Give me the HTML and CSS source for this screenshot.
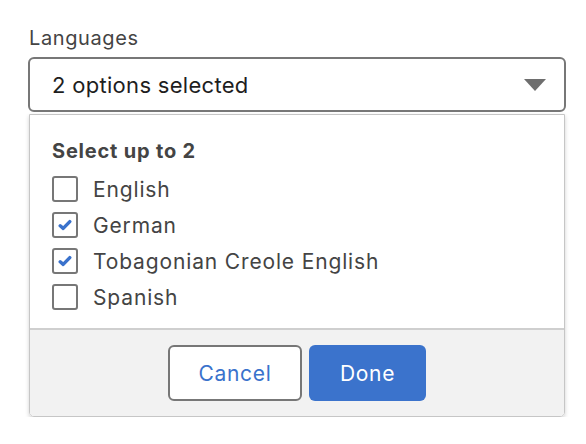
FILE: index.html
```html
<!DOCTYPE html>
<html lang="en">
<head>
<meta charset="utf-8">
<title>Languages</title>
<link rel="stylesheet" href="styles.css">
</head>
<body>
<div class="field">
  <div class="label">Languages</div>
  <div class="select">
    <span class="select-value">2 options selected</span>
    <svg class="caret" width="22" height="12" viewBox="0 0 22 12"><path d="M0 0H22L11 12Z" fill="#6e6e6e"/></svg>
  </div>
  <div class="panel">
    <div class="panel-body">
      <div class="heading">Select up to 2</div>
      <ul class="options">
        <li class="option"><span class="box"></span>English</li>
        <li class="option"><span class="box"><svg class="check" width="14" height="12" viewBox="0 0 14 12"><path d="M2.2 6.8L5.2 9.4L11.8 2.6" fill="none" stroke="#3a72cc" stroke-width="3.4" stroke-linecap="round" stroke-linejoin="round"/></svg></span>German</li>
        <li class="option"><span class="box"><svg class="check" width="14" height="12" viewBox="0 0 14 12"><path d="M2.2 6.8L5.2 9.4L11.8 2.6" fill="none" stroke="#3a72cc" stroke-width="3.4" stroke-linecap="round" stroke-linejoin="round"/></svg></span>Tobagonian Creole English</li>
        <li class="option"><span class="box"></span>Spanish</li>
      </ul>
    </div>
    <div class="panel-footer">
      <button class="btn btn-cancel">Cancel</button>
      <button class="btn btn-done">Done</button>
    </div>
  </div>
</div>
</body>
</html>
```

FILE: styles.css
```css
html, body {
  margin: 0;
  padding: 0;
  background: #ffffff;
}
body {
  font-family: Inter, "Liberation Sans", sans-serif;
  color: #444444;
}
.field {
  width: 538px;
  margin-left: 28px;
  padding-top: 26px;
}
.label {
  font-size: 20px;
  line-height: 24px;
  letter-spacing: 0.6px;
  color: #444444;
  padding-left: 1px;
}
.select {
  margin-top: 7px;
  height: 55px;
  box-sizing: border-box;
  border: 2px solid #777777;
  border-radius: 6px;
  display: flex;
  align-items: center;
  justify-content: space-between;
  padding: 0 18px 0 22px;
}
.select-value {
  font-size: 22px;
  letter-spacing: 0.3px;
  color: #1e1e1e;
}
.caret {
  display: block;
}
.panel {
  margin: 2px 1px 0;
  border: 1px solid #c6c6c6;
  border-radius: 0 0 5px 5px;
  box-shadow: 0 2px 4px rgba(0, 0, 0, 0.18);
  overflow: hidden;
}
.panel-body {
  padding: 24px 22px 13px;
}
.heading {
  font-size: 20px;
  font-weight: 700;
  line-height: 24px;
  letter-spacing: 0.8px;
  color: #444444;
}
.options {
  list-style: none;
  margin: 8px 0 0;
  padding: 0;
}
.option {
  display: flex;
  align-items: center;
  gap: 15px;
  height: 36px;
  font-size: 21px;
  letter-spacing: 0.85px;
  color: #444444;
}
.box {
  width: 26px;
  height: 26px;
  box-sizing: border-box;
  border: 2px solid #777777;
  border-radius: 3px;
  display: flex;
  align-items: center;
  justify-content: center;
  background: #ffffff;
}
.panel-footer {
  border-top: 2px solid #cfcfcf;
  background: #f2f2f2;
  display: flex;
  justify-content: center;
  gap: 7px;
  padding: 15px 0 15px;
}
.btn {
  height: 56px;
  box-sizing: border-box;
  border-radius: 6px;
  font-family: Inter, "Liberation Sans", sans-serif;
  font-size: 21px;
  letter-spacing: 0.7px;
  cursor: pointer;
}
.btn-cancel {
  width: 134px;
  border: 2px solid #777777;
  background: #ffffff;
  color: #3a72cc;
}
.btn-done {
  width: 117px;
  border: none;
  background: #3b73cc;
  color: #ffffff;
}
```
